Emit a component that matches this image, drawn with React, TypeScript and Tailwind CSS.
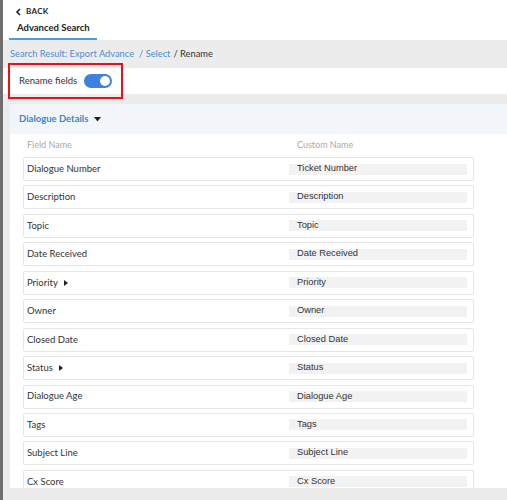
import React from "react";

const rows: { name: string; custom: string; caret?: boolean }[] = [
  { name: "Dialogue Number", custom: "Ticket Number" },
  { name: "Description", custom: "Description" },
  { name: "Topic", custom: "Topic" },
  { name: "Date Received", custom: "Date Received" },
  { name: "Priority", custom: "Priority", caret: true },
  { name: "Owner", custom: "Owner" },
  { name: "Closed Date", custom: "Closed Date" },
  { name: "Status", custom: "Status", caret: true },
  { name: "Dialogue Age", custom: "Dialogue Age" },
  { name: "Tags", custom: "Tags" },
  { name: "Subject Line", custom: "Subject Line" },
  { name: "Cx Score", custom: "Cx Score" },
];

export default function App() {
  return (
    <div className="w-[507px] h-[500px] overflow-hidden flex flex-col border-l-[3px] border-[#6e6e6e] bg-[#ececec] font-['Lato','Liberation_Sans',sans-serif] text-[#333]">
      <div className="h-[40px] bg-white flex flex-col shrink-0">
        <div className="flex items-center gap-[4px] pl-[12px] pt-[6px] h-[16px]">
          <svg width="7" height="8" viewBox="0 0 7 8" className="mt-[1px]">
            <path d="M5 1 L2 4 L5 7" stroke="#222" strokeWidth="1.6" fill="none" />
          </svg>
          <span className="text-[8px] font-bold tracking-[0.3px] text-[#222]">BACK</span>
        </div>
        <div className="ml-[6px] mt-[6px] w-[88px] h-[18px] border-b-[2px] border-[#4a9de0] flex items-start pl-[8px]">
          <span className="text-[9.5px] font-bold text-[#222] leading-[12px]">Advanced Search</span>
        </div>
      </div>
      <div className="h-[28px] flex items-center pl-[7px] text-[9.3px] shrink-0">
        <span className="text-[#4a90d0]">Search Result: Export Advance</span>
        <span className="text-[#4a90d0] ml-[5px]">/ Select</span>
        <span className="text-[#333] ml-[3px]">/ Rename</span>
      </div>
      <div className="relative h-[26px] bg-white shrink-0 flex items-center">
        <div className="absolute left-[5px] top-[-5px] w-[115px] h-[36px] border-[2px] border-[#e8101a]" />
        <span className="ml-[16px] text-[9.5px] text-[#333]">Rename fields</span>
        <div className="ml-[7px] w-[28px] h-[14px] rounded-full bg-[#3d82e0] relative">
          <div className="absolute right-[2px] top-[2px] w-[10px] h-[10px] rounded-full bg-white" />
        </div>
      </div>
      <div className="mt-[10px] ml-[7px] h-[384px] bg-white flex flex-col overflow-hidden shrink-0">
        <div className="h-[30px] bg-[#f2f6fb] flex items-center pl-[9px] shrink-0">
          <span className="text-[9.5px] font-bold text-[#3d86c8]">Dialogue Details</span>
          <svg width="7" height="5" viewBox="0 0 7 5" className="ml-[6px]">
            <path d="M0 0 L7 0 L3.5 4.5 Z" fill="#222" />
          </svg>
        </div>
        <div className="h-[23px] flex items-center text-[9px] text-[#aaa] shrink-0 pb-[2px]">
          <span className="w-[270px] pl-[17px]">Field Name</span>
          <span className="pl-[17px]">Custom Name</span>
        </div>
        <div className="flex flex-col gap-[4.45px] pl-[13px] pr-[33px]">
          {rows.map((r) => (
            <div
              key={r.name}
              className="h-[24px] shrink-0 border border-[#e6e6e6] rounded-[2px] flex items-center"
            >
              <div className="w-[265px] pl-[3px] flex items-center text-[9.5px] text-[#333]">
                <span>{r.name}</span>
                {r.caret && (
                  <svg width="4" height="6" viewBox="0 0 4 6" className="ml-[6px]">
                    <path d="M0 0 L4 3 L0 6 Z" fill="#222" />
                  </svg>
                )}
              </div>
              <div className="w-[178px] h-[11px] bg-[#f2f2f2] flex items-center pl-[8px] text-[9.3px] text-[#333] font-['Liberation_Sans',sans-serif]">
                {r.custom}
              </div>
            </div>
          ))}
        </div>
      </div>
    </div>
  );
}
